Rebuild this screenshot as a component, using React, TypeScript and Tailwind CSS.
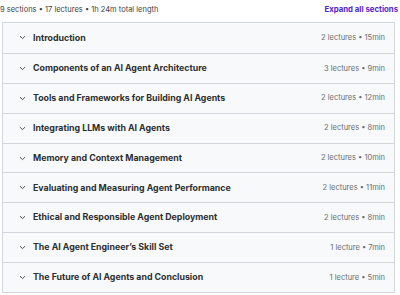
import React from "react";

const sections = [
  ["Introduction", "2 lectures • 15min"],
  ["Components of an AI Agent Architecture", "3 lectures • 9min"],
  ["Tools and Frameworks for Building AI Agents", "2 lectures • 12min"],
  ["Integrating LLMs with AI Agents", "2 lectures • 8min"],
  ["Memory and Context Management", "2 lectures • 10min"],
  ["Evaluating and Measuring Agent Performance", "2 lectures • 11min"],
  ["Ethical and Responsible Agent Deployment", "2 lectures • 8min"],
  ["The AI Agent Engineer’s Skill Set", "1 lecture • 7min"],
  ["The Future of AI Agents and Conclusion", "1 lecture • 5min"],
];

function Chevron() {
  return (
    <svg width="7" height="5" viewBox="0 0 7 5" className="shrink-0">
      <path d="M1 1.2 L3.5 3.6 L6 1.2" fill="none" stroke="#3e4143" strokeWidth="0.9" />
    </svg>
  );
}

export default function App() {
  return (
    <div
      className="w-[400px] h-[295px] bg-white overflow-hidden"
      style={{ fontFamily: "Inter, 'Liberation Sans', sans-serif" }}
    >
      <div className="flex items-center justify-between h-[22px] pb-[2px] pr-[2px]">
        <span className="text-[7.5px] text-[#3e4143] leading-none">
          9 sections • 17 lectures • 1h 24m total length
        </span>
        <span className="text-[7.8px] font-bold text-[#5624d0] leading-none">Expand all sections</span>
      </div>
      <div className="ml-[2px] w-[393px] border border-[#d1d7dc]">
        {sections.map(([title, meta], i) => (
          <div
            key={i}
            className={`flex items-center h-[29.9px] bg-[#f7f9fa] pl-[16px] pr-[9px] ${
              i > 0 ? "border-t border-[#d1d7dc]" : ""
            }`}
          >
            <Chevron />
            <span className="ml-[7px] text-[8.8px] font-bold text-[#2d2f31] leading-none flex-1">
              {title}
            </span>
            <span className="text-[7.5px] text-[#6a6f73] leading-none">{meta}</span>
          </div>
        ))}
      </div>
    </div>
  );
}
